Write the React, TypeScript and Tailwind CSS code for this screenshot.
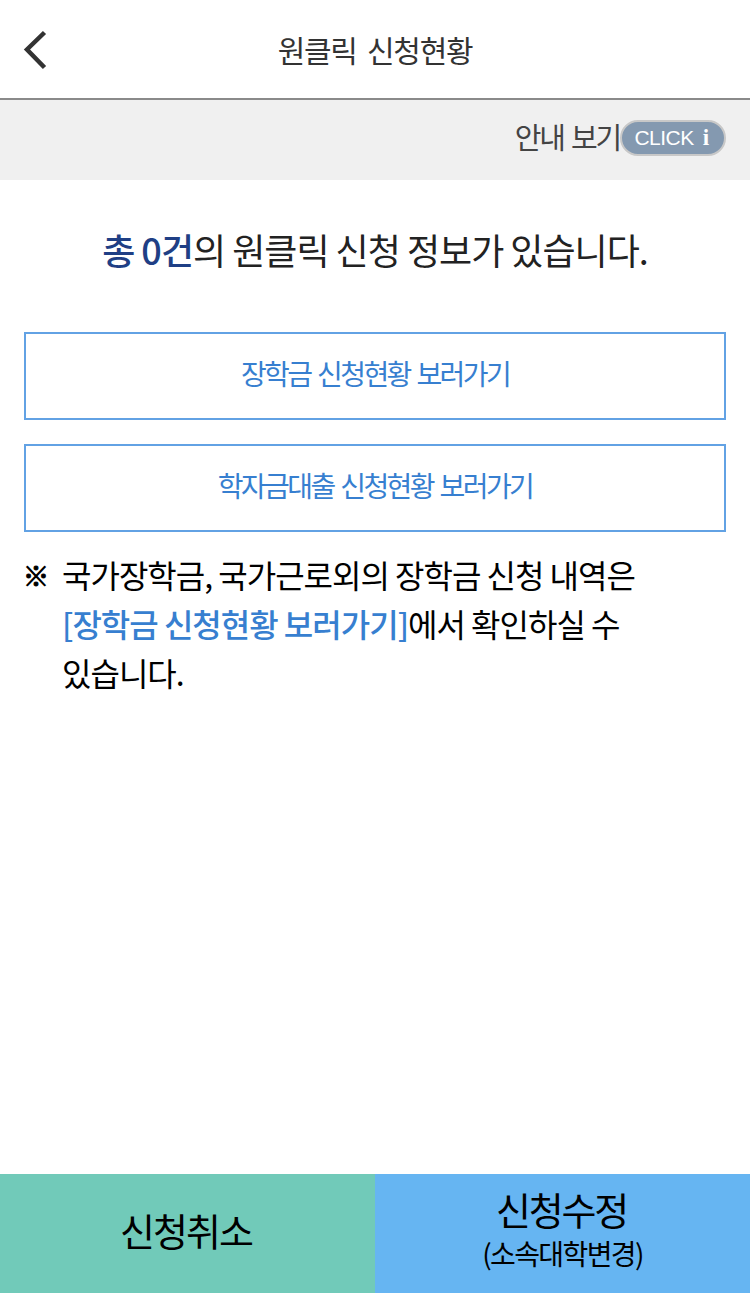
import React from 'react';

const FONT = "font-['Noto_Sans_CJK_KR','Noto_Sans',sans-serif]";

function LinkBox({ label }: { label: string }) {
  return (
    <button
      type="button"
      className="block w-full h-[88px] pb-[7px] border-2 border-[#62a2e4] bg-white text-[#377fd0] text-[28px] tracking-[-2.6px] [word-spacing:3px] text-center"
    >
      {label}
    </button>
  );
}

export default function App() {
  return (
    <div className={`${FONT} relative w-[750px] h-[1293px] bg-white flex flex-col overflow-hidden`}>
      {/* header */}
      <header className="relative h-[100px] shrink-0 border-b-2 border-[#8a8a8a] flex items-center justify-center">
        <svg className="absolute left-[22px] top-[30px]" width="26" height="40" viewBox="0 0 26 40" fill="none">
          <path d="M22.5 2.5 L5 19.5 L22.5 37.5" stroke="#333" strokeWidth="4.5" />
        </svg>
        <h1 className="text-[30px] tracking-[-1.3px] [word-spacing:5px] text-[#333] font-normal">원클릭 신청현황</h1>
      </header>

      {/* guide */}
      <div className="h-[80px] shrink-0 bg-[#f0f0f0] flex items-center justify-end pr-[24px] pb-[4px]">
        <span className="text-[29px] tracking-[-2.2px] [word-spacing:3px] text-[#444] pb-[3px]">안내 보기</span>
        <span className="w-[106px] h-[36px] rounded-full bg-[#8499b0] border-2 border-[#c8c8c8] flex items-center justify-center gap-[9px] pr-[3px] text-white text-[21px] tracking-[-0.5px] font-['Liberation_Sans',sans-serif]">
          CLICK
          <span className="font-['Liberation_Serif',serif] font-bold text-[23px]">i</span>
        </span>
      </div>

      <main className="flex-1 px-[24px]">
        <p className="mt-[43px] text-center text-[36px] leading-[52px] tracking-[-1px] text-[#222]">
          <span className="text-[#1f3f85] font-medium">총 0건</span>의 원클릭 신청 정보가 있습니다.
        </p>

        <div className="mt-[57px] flex flex-col gap-[24px]">
          <LinkBox label="장학금 신청현황 보러가기" />
          <LinkBox label="학자금대출 신청현황 보러가기" />
        </div>

        <div className="mt-[18px] flex text-[32px] leading-[49px] tracking-[-1px] text-black">
          <span className="w-[39px] shrink-0 font-bold text-[26px] -ml-[1px] [-webkit-text-stroke:1px_black]">※</span>
          <p className="w-[590px] break-keep">
            국가장학금, 국가근로외의 장학금 신청 내역은{' '}
            <span className="text-[#377fd0] font-medium">[장학금 신청현황 보러가기]</span>에서 확인하실 수 있습니다.
          </p>
        </div>
      </main>

      {/* bottom buttons */}
      <div className="h-[119px] shrink-0 flex text-black [text-shadow:0_1px_3px_rgba(255,255,255,0.7)]">
        <button type="button" className="w-1/2 bg-[#71cab9] text-[38px] tracking-[-2px] pb-[8px] pr-[3px]">
          신청취소
        </button>
        <button type="button" className="w-1/2 bg-[#66b5f2] flex flex-col items-center justify-center pb-[7px]">
          <span className="text-[38px] leading-[45px] tracking-[-2.2px] pr-[2px]">신청수정</span>
          <span className="text-[28px] leading-[41px] tracking-[-1.6px] pt-[2px]">(소속대학변경)</span>
        </button>
      </div>
    </div>
  );
}
